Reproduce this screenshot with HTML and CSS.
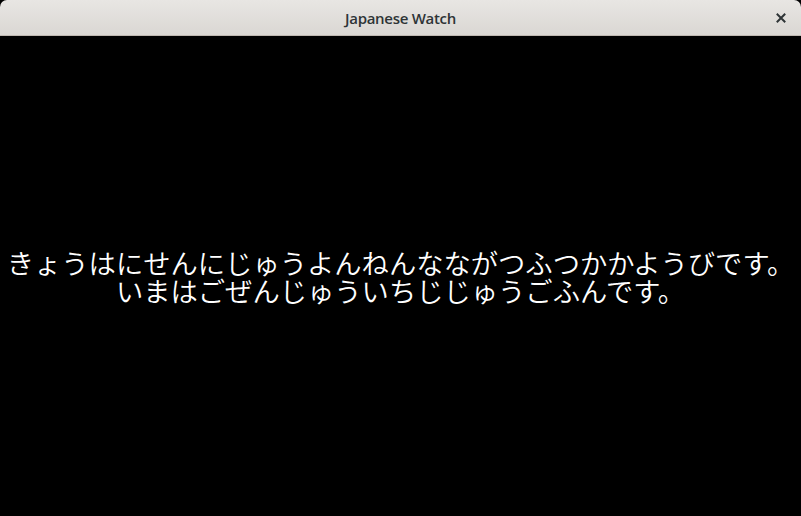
FILE: index.html
```html
<!DOCTYPE html>
<html lang="ja">
<head>
<meta charset="utf-8">
<link rel="stylesheet" href="styles.css">
</head>
<body>
<div class="window">
  <header class="titlebar">
    <span class="title">Japanese Watch</span>
    <button class="close" aria-label="close">
      <svg width="10" height="10" viewBox="0 0 10 10"><path d="M1.5 1.5 L8.5 8.5 M8.5 1.5 L1.5 8.5" stroke="#2e3436" stroke-width="2" stroke-linecap="square"/></svg>
    </button>
  </header>
  <main class="content">
    <p class="line">きょうはにせんにじゅうよんねんなながつふつかかようびです。</p>
    <p class="line">いまはごぜんじゅういちじじゅうごふんです。</p>
  </main>
</div>
</body>
</html>
```
FILE: styles.css
```css
* { box-sizing: border-box; }
html, body { margin: 0; padding: 0; background: #000; }
.window { width: 801px; height: 516px; display: flex; flex-direction: column; }
.titlebar {
  height: 36px; flex: none; position: relative;
  display: flex; align-items: center; justify-content: center;
  background: linear-gradient(#e8e6e3, #dad7d3);
  border-bottom: 1px solid #bfb8b1;
  border-radius: 7px 7px 0 0;
}
.title { font-family: "Open Sans", "Noto Sans", sans-serif; font-weight: 600; font-size: 15px; color: #2e3436; letter-spacing: -0.3px; }
.close { position: absolute; right: 14px; top: 12px; width: 12px; height: 12px; padding: 0; border: 0; background: none; display: flex; align-items: center; justify-content: center; }
.content {
  flex: 1; display: flex; flex-direction: column; align-items: center; justify-content: center;
  color: #fff; font-family: "Noto Sans CJK JP", sans-serif; font-size: 27.3px; line-height: 28px; font-weight: 350;
  text-align: center;
}
.line { margin: 0; white-space: nowrap; }
```
